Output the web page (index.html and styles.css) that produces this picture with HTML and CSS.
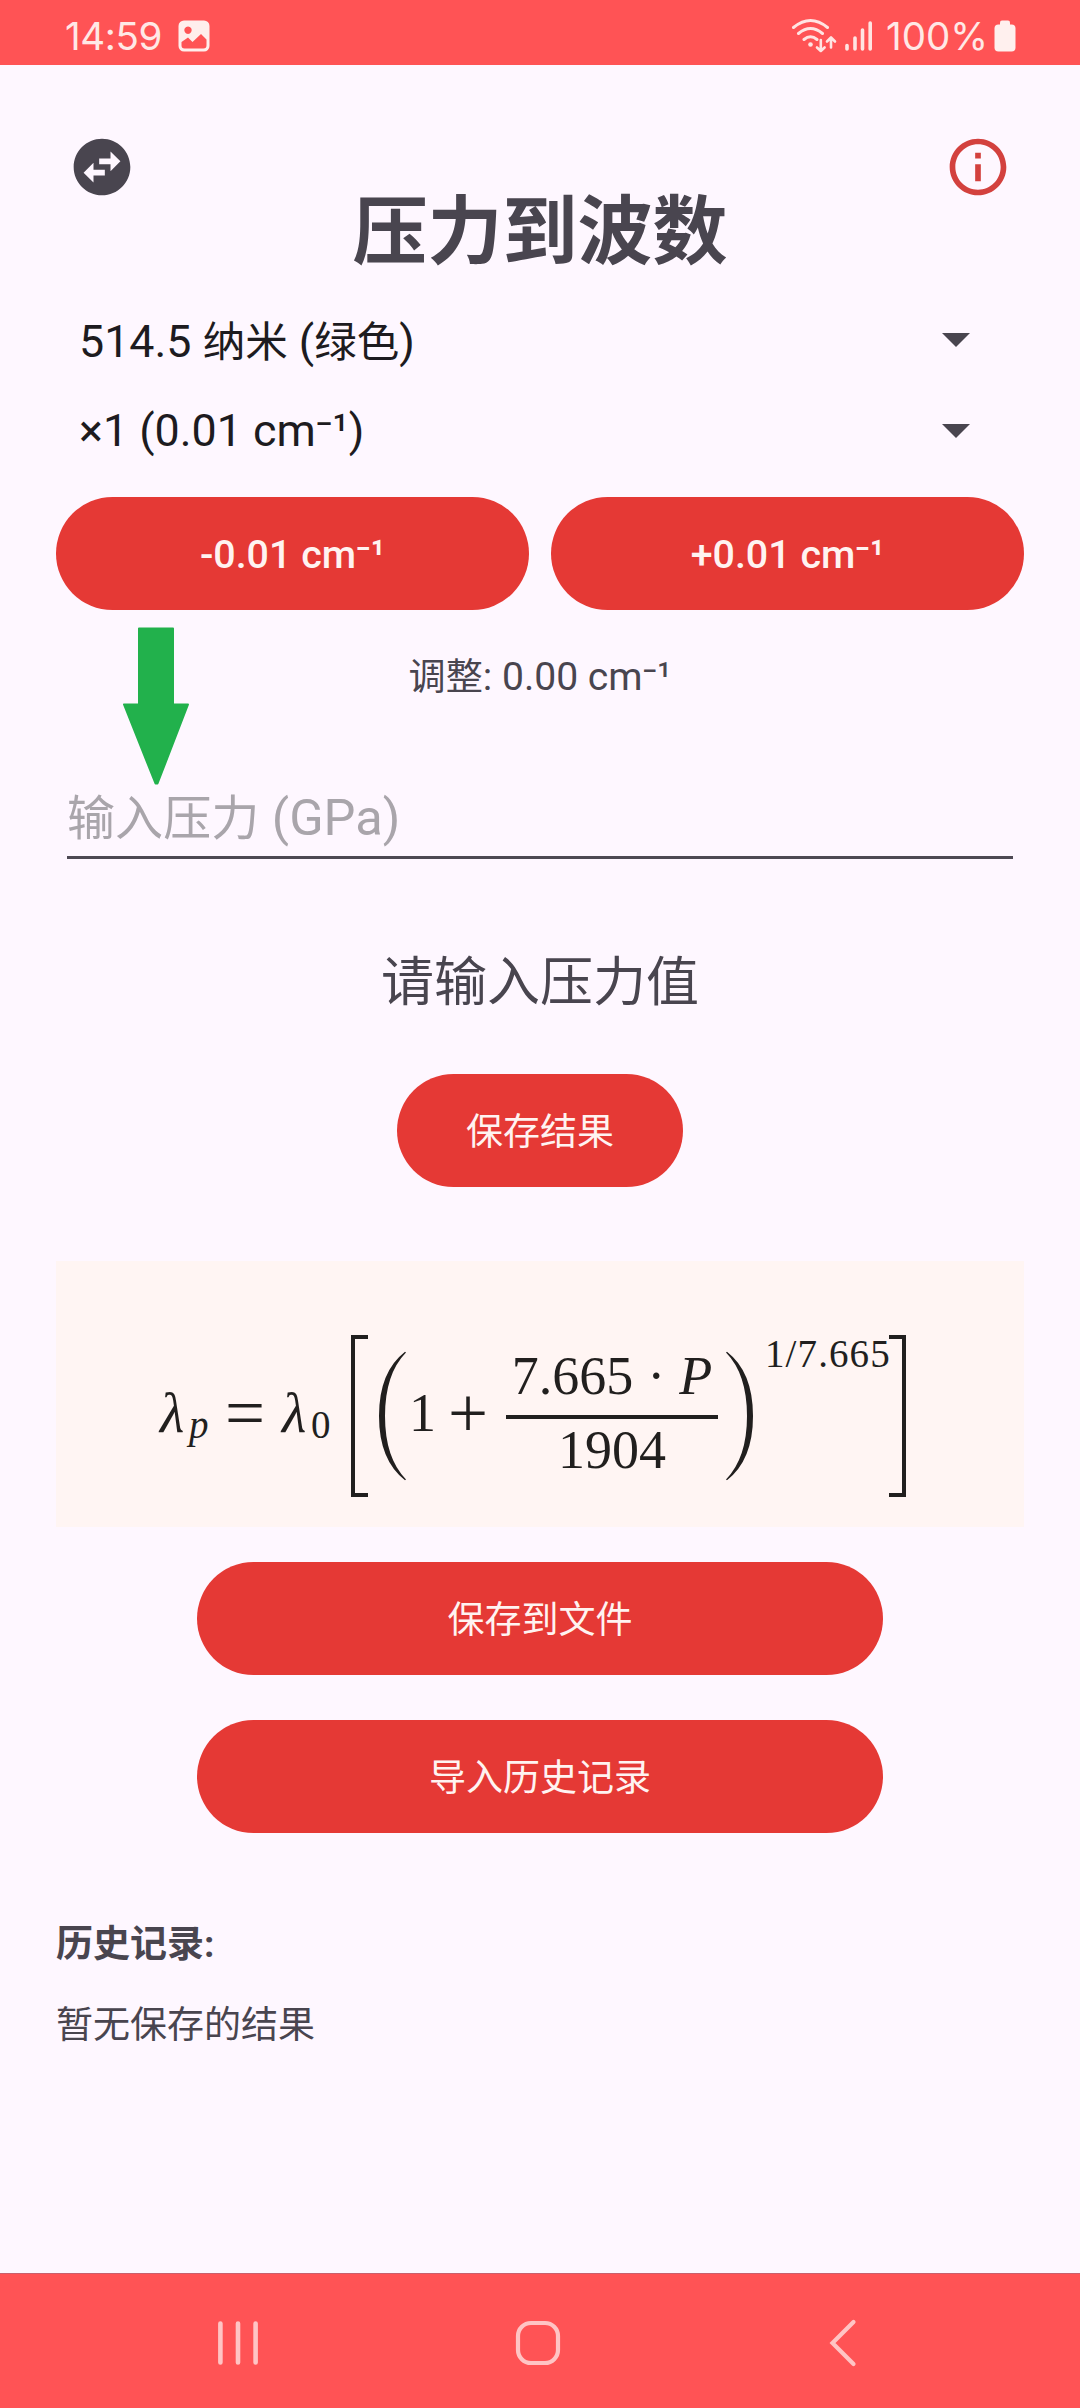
FILE: index.html
```html
<!DOCTYPE html>
<html lang="zh-CN">
<head>
<meta charset="utf-8">
<title>压力到波数</title>
<link rel="stylesheet" href="styles.css">
</head>
<body>
<div class="status">
  <span class="clock">14:59</span>
  <svg class="photo" width="32" height="32" viewBox="0 0 32 32"><path fill="#ffeeec" fill-rule="evenodd" d="M6 0.500h20a5.500 5.500 0 0 1 5.500 5.500v20a5.500 5.500 0 0 1-5.500 5.500H6a5.500 5.500 0 0 1-5.500-5.500V6A5.500 5.500 0 0 1 6 .5zM10 6.500a3.700 3.700 0 1 0 .01 0zM3.500 22v3.500a3 3 0 0 0 3 3h19a3 3 0 0 0 3-3V19.500L23 14l-8.500 8L10 17.500z"/></svg>
  <span class="spacer"></span>
  <svg class="wifi" width="46" height="36" viewBox="0 0 46 36" fill="none" stroke="#ffe4e2" stroke-width="3" stroke-linecap="round" stroke-linejoin="round">
    <path d="M2.500 9.500Q19.500-4.500 36.500 9.500M7.500 15.500Q19.500 5.500 31.500 15.500M13 21.500Q19.500 16 26 21.500"/>
    <circle cx="19.500" cy="26.500" r="2.300" fill="#ffe4e2" stroke="none"/>
    <path stroke-width="2.600" d="M29.800 22v10.500M26 29.500l3.800 3.500 3.800-3.500M40 29.500V20M36 23.500l4-4 4 4"/>
  </svg>
  <svg class="signal" width="28" height="30" viewBox="0 0 28 30" stroke="#ffe4e2" stroke-width="3.600" stroke-linecap="round"><path d="M2 24.500v3.500M10 17v11M17.500 9v19M25.200 2v26"/></svg>
  <span class="percent">100%</span>
  <svg class="battery" width="22" height="32" viewBox="0 0 22 32" fill="#fff0ee"><rect x="6" y="0.500" width="10" height="8" rx="2"/><rect x="0.500" y="4.500" width="21" height="27" rx="4"/></svg>
</div>

<main class="content">
  <header class="header">
    <svg width="68" height="68" viewBox="0 0 24 24"><path fill="#49454f" d="M22 12c0-5.520-4.480-10-10-10S2 6.480 2 12s4.480 10 10 10 10-4.480 10-10zm-7-5.500l3.500 3.500-3.500 3.500V11h-4V9h4V6.500zm-6 11L5.500 14 9 10.500V13h4v2H9v2.500z"/></svg>
    <h1 class="title">压力到波数</h1>
    <svg width="68" height="68" viewBox="0 0 24 24"><path fill="#d3413e" d="M11 7h2v2h-2zm0 4h2v6h-2zm1-9C6.480 2 2 6.480 2 12s4.480 10 10 10 10-4.480 10-10S17.520 2 12 2zm0 18c-4.410 0-8-3.590-8-8s3.590-8 8-8 8 3.590 8 8-3.590 8-8 8z"/></svg>
  </header>

  <div class="select first"><span class="value">514.5 <span class="cjk">纳米</span> (<span class="cjk">绿色</span>)</span><i class="caret"></i></div>
  <div class="select"><span class="value">×1 (0.01 cm⁻¹)</span><i class="caret"></i></div>

  <div class="pair">
    <button class="btn num">-0.01 cm⁻¹</button>
    <button class="btn num">+0.01 cm⁻¹</button>
  </div>

  <p class="adjust"><span class="cjk">调整</span>: 0.00 cm⁻¹
    <svg class="pointer" width="66" height="158" viewBox="0 0 66 158"><path fill="#22b14c" stroke="#22b14c" stroke-width="2" stroke-linejoin="round" d="M16 1.500h34V77.500H65L34.500 156.500h-2L1 77.500H16z"/></svg>
  </p>

  <div class="field"><span class="hint"><span class="cjk">输入压力</span> (GPa)</span></div>

  <p class="result">请输入压力值</p>
  <button class="btn save">保存结果</button>

  <div class="formula">
    <i class="sym lam">λ</i><i class="sub pp">p</i>
    <span class="op eq">=</span>
    <i class="sym lam2">λ</i><span class="sub zero">0</span>
    <span class="bracket left"></span>
    <svg class="paren" width="27" height="130" viewBox="0 0 27 130"><path fill="#211f1e" d="M26 .8Q0 21 0 65t26 64.200l1-.8Q6 107 6 65T27 1.500z"/></svg>
    <span class="sym one">1</span>
    <span class="op plus">+</span>
    <span class="frac"><span class="top">7.665<span class="dot">·</span><i>P</i></span><span class="bottom">1904</span></span>
    <svg class="paren close" width="27" height="130" viewBox="0 0 27 130"><path fill="#211f1e" d="M1 .8Q27 21 27 65T1 129.200l-1-.8Q21 107 21 65T0 1.500z"/></svg>
    <span class="sup">1/7.665</span>
    <span class="bracket right"></span>
  </div>

  <button class="btn wide">保存到文件</button>
  <button class="btn wide import">导入历史记录</button>

  <h2 class="history">历史记录<span class="colon">:</span></h2>
  <p class="empty">暂无保存的结果</p>
</main>

<nav class="nav">
  <svg width="42" height="48" viewBox="0 0 42 48" stroke="#ffc4c4" stroke-width="4.600" stroke-linecap="round"><path d="M3.400 4.500v39M21 4.500v39M38.600 4.500v39"/></svg>
  <svg width="48" height="48" viewBox="0 0 48 48" fill="none" stroke="#ffc4c4" stroke-width="4.200"><rect x="4" y="4" width="40" height="40" rx="13"/></svg>
  <svg width="28" height="48" viewBox="0 0 28 48" fill="none" stroke="#ffc4c4" stroke-width="4.200" stroke-linecap="round"><path d="M24.500 3L3.500 24l21 21"/></svg>
</nav>
</body>
</html>
```
FILE: styles.css
```css
* { box-sizing: border-box; }
body {
  margin: 0;
  width: 1080px;
  height: 2408px;
  display: flex;
  flex-direction: column;
  background: #fef7ff;
  color: #49454f;
  font-family: Roboto, "Noto Sans CJK SC", sans-serif;
}
h1, h2, p { margin: 0; font-weight: 400; }

.status {
  height: 65px;
  padding: 7px 64px 0 65px;
  display: flex;
  align-items: center;
  background: #ff5355;
  color: #ffe8e6;
  font-family: Inter, sans-serif;
  font-size: 38.5px;
  line-height: 58px;
}
.clock { width: 97px; letter-spacing: -0.4px; white-space: nowrap; }
.photo { margin-left: 16px; }
.spacer { flex: 1; }
.wifi { margin-right: 8px; }
.signal { margin-right: 13px; }
.percent { width: 104px; letter-spacing: 0; white-space: nowrap; }
.battery { margin-left: 4px; }

.content {
  height: 2208px;
  padding: 68px 56px 0;
  display: flex;
  flex-direction: column;
}
.header {
  height: 161px;
  padding: 0 12px;
  display: flex;
  justify-content: space-between;
  align-items: flex-start;
}
.title { margin-top: 55px; font-size: 75px; line-height: 88px; font-weight: 700; }
.cjk { font-size: 0.95em; }

.select {
  height: 91px;
  padding: 0 54px 0 23px;
  display: flex;
  align-items: center;
  justify-content: space-between;
  font-size: 44.8px;
  line-height: 54px;
  color: #1d1b20;
}
.first .value { padding-top: 6px; }
.caret {
  border: 14px solid transparent;
  border-top-color: #49454f;
  border-bottom: 0;
}

.btn {
  flex: none;
  height: 113px;
  padding: 5px 0 0;
  border: 0;
  border-radius: 57px;
  background: #e53935;
  color: #fff3f1;
  font: 400 37px/54px Roboto, "Noto Sans CJK SC", sans-serif;
}
.pair { display: grid; grid-template-columns: 1fr 1fr; gap: 22px; margin-top: 21px; }
.num { padding-top: 3px; font-size: 39.4px; font-weight: 500; }

.adjust {
  position: relative;
  height: 46px;
  margin-top: 44px;
  text-align: center;
  font-size: 39.1px;
  line-height: 46px;
}
.pointer { position: absolute; left: 67px; top: -27px; }

.field {
  height: 118px;
  margin: 41px 11px 0;
  padding: 47px 0 0 0;
  border-bottom: 3px solid #4d4953;
  font-size: 50.6px;
  line-height: 60px;
  color: #a9a5ab;
}
.result { margin-top: 89px; text-align: center; font-size: 53px; line-height: 70px; }
.save { align-self: center; width: 286px; margin-top: 56px; }

.formula {
  flex: none;
  height: 266px;
  margin-top: 74px;
  padding: 44px 0 0 104px;
  display: flex;
  align-items: center;
  background: #fff5f3;
  color: #211f1e;
  font-family: "Liberation Serif", serif;
  font-size: 54px;
  line-height: 60px;
  white-space: nowrap;
}
.formula > * { flex: none; }
.sym { padding-bottom: 7px; }
.lam, .lam2 { width: 29px; font-size: 56px; }
.sub { font-size: 39px; padding-top: 17px; }
.pp { width: 20px; }
.zero { width: 19px; }
.op { font-size: 71px; text-align: center; padding-bottom: 7px; }
.eq { width: 40px; margin: 0 17px 0 16px; }
.bracket { width: 17px; height: 162px; border: 4px solid #211f1e; }
.left { margin-left: 21px; border-right: 0; }
.right { border-left: 0; }
.paren { margin-left: 11px; }
.one { margin-left: 3px; width: 27px; }
.plus { margin-left: 12px; width: 40px; }
.frac { margin-left: 18px; width: 212px; display: flex; flex-direction: column; text-align: center; }
.top { height: 62px; line-height: 46px; }
.bottom { height: 65px; border-top: 4px solid #211f1e; line-height: 63px; }
.dot { margin: 0 14px; }
.close { margin-left: 8px; }
.sup { margin-left: 12px; width: 124px; padding-bottom: 125px; font-size: 39px; letter-spacing: 1.1px; }

.wide { align-self: center; width: 686px; margin-top: 35px; }
.import { margin-top: 45px; }
.history { margin-top: 84px; font-size: 37px; line-height: 56px; font-weight: 700; }
.empty { margin-top: 25px; font-size: 37px; line-height: 56px; }

.nav {
  height: 135px;
  padding: 3px 223px 0 217px;
  display: grid;
  grid-template-columns: 42px 48px 28px;
  justify-content: space-between;
  align-items: center;
  background: #ff5355;
  border-top: 1px solid #c9606c;
}
.nav svg:nth-child(2) { margin-left: -6px; }
```
